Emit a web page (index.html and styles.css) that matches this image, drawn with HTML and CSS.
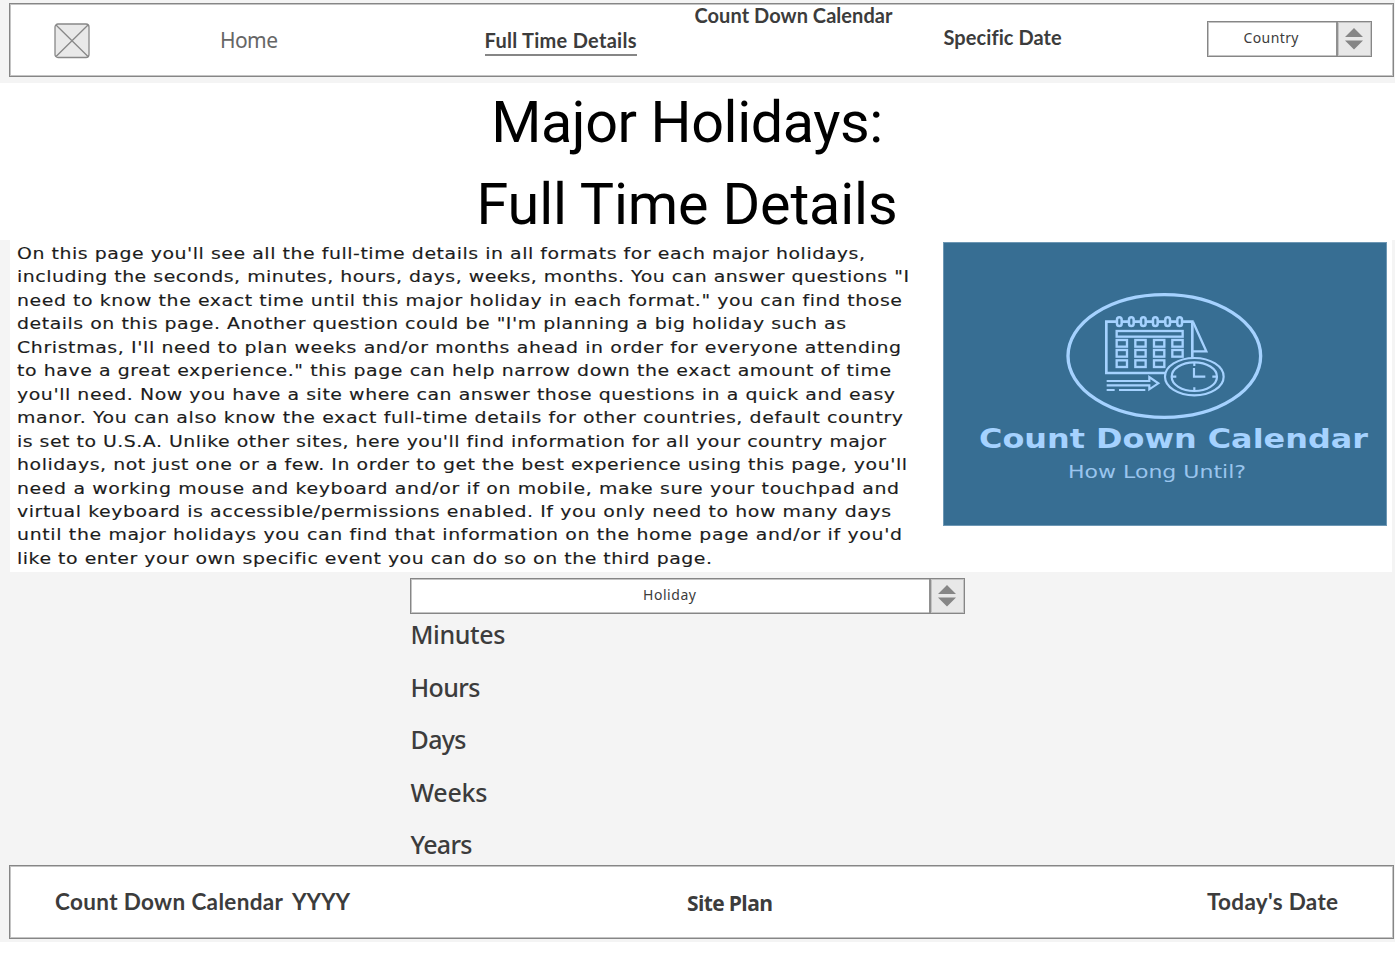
FILE: index.html
```html
<!DOCTYPE html>
<html lang="en">
<head>
<meta charset="utf-8">
<title>Major Holidays: Full Time Details</title>
<link rel="stylesheet" href="styles.css">
</head>
<body>
<div class="page">
  <header class="top">
    <nav class="panel nav">
      <svg class="placeholder" viewBox="0 0 36 36"><rect x="1" y="1" width="34" height="33.5" rx="3"/><path d="M2 2L34 33.5M34 2L2 33.5"/></svg>
      <a class="home"><span data-fit="58">Home</span></a>
      <a class="current"><span data-fit="152">Full Time Details</span></a>
      <a class="brand"><span data-fit="198">Count Down Calendar</span></a>
      <a class="specific"><span data-fit="118">Specific Date</span></a>
      <div class="select country">
        <div class="value"><span data-fit="55">Country</span></div>
        <div class="stepper"><svg viewBox="0 0 18 22"><path d="M9 0L18 9H0zM0 12.5H18L9 21.5z"/></svg></div>
      </div>
    </nav>
  </header>

  <div class="hero">
    <h1><span data-fit="392">Major Holidays:</span><br><span data-fit="421">Full Time Details</span></h1>
  </div>

  <main>
    <section class="intro">
      <p class="copy" data-stretch="1.18">
        <span data-fit="848">On this page you'll see all the full-time details in all formats for each major holidays,</span>
        <span data-fit="892">including the seconds, minutes, hours, days, weeks, months. You can answer questions "I</span>
        <span data-fit="885">need to know the exact time until this major holiday in each format." you can find those</span>
        <span data-fit="829">details on this page. Another question could be "I'm planning a big holiday such as</span>
        <span data-fit="884">Christmas, I'll need to plan weeks and/or months ahead in order for everyone attending</span>
        <span data-fit="874">to have a great experience." this page can help narrow down the exact amount of time</span>
        <span data-fit="878">you'll need. Now you have a site where can answer those questions in a quick and easy</span>
        <span data-fit="886">manor. You can also know the exact full-time details for other countries, default country</span>
        <span data-fit="869">is set to U.S.A. Unlike other sites, here you'll find information for all your country major</span>
        <span data-fit="890">holidays, not just one or a few. In order to get the best experience using this page, you'll</span>
        <span data-fit="882">need a working mouse and keyboard and/or if on mobile, make sure your touchpad and</span>
        <span data-fit="874">virtual keyboard is accessible/permissions enabled. If you only need to how many days</span>
        <span data-fit="885">until the major holidays you can find that information on the home page and/or if you'd</span>
        <span data-fit="695">like to enter your own specific event you can do so on the third page.</span>
      </p>
      <svg class="logo" viewBox="0 0 444 284">
        <rect class="logo-bg" x=".5" y=".5" width="443" height="283"/>
        <g class="art" transform="translate(107 38) scale(.3333)">
          <ellipse cx="343" cy="228" rx="289" ry="184" stroke-width="10"/>
          <path d="M345 279H169V125H427V234" stroke-width="8"/>
          <path d="M429 125L469 214H429" stroke-width="7"/>
          <g class="ring" stroke-width="7.5">
            <rect x="201" y="112" width="14" height="26" rx="7"/><rect x="237" y="112" width="14" height="26" rx="7"/><rect x="273" y="112" width="14" height="26" rx="7"/><rect x="309" y="112" width="14" height="26" rx="7"/><rect x="346" y="112" width="14" height="26" rx="7"/><rect x="382" y="112" width="14" height="26" rx="7"/>
          </g>
          <g stroke-width="7">
            <rect x="200" y="153" width="198" height="17"/>
            <rect x="200" y="180" width="31" height="20"/><rect x="256" y="180" width="31" height="20"/><rect x="312" y="180" width="31" height="20"/><rect x="367" y="180" width="31" height="20"/>
            <rect x="200" y="210" width="31" height="20"/><rect x="256" y="210" width="31" height="20"/><rect x="312" y="210" width="31" height="20"/><rect x="367" y="210" width="31" height="20"/>
            <rect x="200" y="241" width="31" height="20"/><rect x="256" y="241" width="31" height="20"/><rect x="312" y="241" width="31" height="20"/>
          </g>
          <g stroke-width="6.5">
            <ellipse class="ring" cx="433" cy="290" rx="88" ry="56"/>
            <ellipse cx="433" cy="290" rx="68" ry="43"/>
            <path d="M432 264V290H466M433 247V258M433 322V333M365 290H379M487 290H501"/>
            <path d="M170 303H298V291L325 310L298 328V316H170M170 330H194M207 330H286"/>
          </g>
        </g>
        <text class="logo-name" x="36" y="206" textLength="389" lengthAdjust="spacingAndGlyphs">Count Down Calendar</text>
        <text class="logo-tag" x="125" y="236" textLength="178" lengthAdjust="spacingAndGlyphs">How Long Until?</text>
      </svg>
    </section>

    <section class="details">
      <div class="select holiday">
        <div class="value"><span data-fit="53">Holiday</span></div>
        <div class="stepper"><svg viewBox="0 0 18 22"><path d="M9 0L18 9H0zM0 12.5H18L9 21.5z"/></svg></div>
      </div>
      <ul>
        <li><span data-fit="95">Minutes</span></li>
        <li><span data-fit="70">Hours</span></li>
        <li><span data-fit="56">Days</span></li>
        <li><span data-fit="77">Weeks</span></li>
        <li><span data-fit="62">Years</span></li>
      </ul>
    </section>
  </main>

  <footer class="panel foot">
    <div><span data-fit="228">Count Down Calendar</span><span class="year" data-fit="58">YYYY</span></div>
    <div class="plan"><span data-fit="86">Site Plan</span></div>
    <div><span data-fit="131">Today's Date</span></div>
  </footer>
</div>
<script src="fit.js"></script>
</body>
</html>
```

FILE: styles.css
```css
* { box-sizing: border-box; }
body { margin: 0; background: #fff; overflow: hidden; font-family: "Lato", sans-serif; color: #3c3c3c; }
[data-fit] { display: inline-block; white-space: pre; }

.page { height: 942px; background: #f4f4f4; }
.top { height: 83px; padding: 3px 1px 0 9px; }
.panel { height: 74px; background: #fff; border: 1px solid #868686; box-shadow: inset 0 0 0 1px #c4c4c4; }

.nav { display: grid; grid-template-columns: 165px 265px 210px 249px 263px 165px; padding-left: 44.5px; align-items: start; }
.nav a { font-size: 20px; font-weight: 700; line-height: 26px; }
.placeholder { width: 36px; height: 36px; margin: 19px 0 0 -.5px; }
.placeholder rect { fill: #e9e9e9; stroke: #888; stroke-width: 1.3; }
.placeholder path { stroke: #888; stroke-width: 1.3; }
.nav .home { margin-top: 22px; padding-left: .5px; font: 400 21px/28px "Noto Sans", sans-serif; color: #666; }
.nav .current { margin-top: 23px; }
.current span { height: 29px; border-bottom: 2px solid #868686; }
.brand { margin-top: -2px; }
.specific { margin-top: 20px; }
.country { width: 165px; margin-top: 17px; }

.select { display: flex; height: 36px; background: #fff; border: 1px solid #868686; box-shadow: inset 0 0 0 1px #c4c4c4; }
.select .value { flex: 1; padding-right: 1px; font: 400 14px/31px "Noto Sans", sans-serif; text-align: center; }
.stepper { width: 35px; background: #e8e8e8; border-left: 2px solid #909090; box-shadow: inset 0 0 0 1px #c4c4c4; display: flex; align-items: center; justify-content: center; padding-right: 1px; }
.stepper svg { width: 18px; height: 22px; fill: #868686; }

.hero { display: flow-root; height: 157px; background: #fff; }
h1 { margin: -1px 21px 0 0; font: 400 57.5px/82px "Roboto", sans-serif; text-align: center; color: #000; }

.intro { display: flex; height: 332px; margin: 0 3px 0 10px; padding: 2px 5px 0 7px; background: #fff; justify-content: space-between; }
.copy { margin: 0; font: 16px/23.46px "DejaVu Sans", sans-serif; color: #1c1c1c; transform: scaleX(1.18); transform-origin: left top; -webkit-text-stroke: .15px #1c1c1c; }
.copy span { display: table; }
.logo { width: 444px; height: 284px; }
.logo-bg { fill: #376e93; stroke: #6d97b4; }
.art { fill: none; stroke: #a5d2ff; }
.art .ring { fill: #376e93; }
.logo-name { font: 700 26px "DejaVu Sans", sans-serif; fill: #a5d2ff; }
.logo-tag { font: 400 17px "DejaVu Sans", sans-serif; fill: #9ac5ee; }

.details { width: 555px; height: 293px; margin-left: 410px; padding-top: 6px; }
.details ul { display: flex; flex-direction: column; gap: 12.5px; margin: 0; padding: 0 0 0 .5px; list-style: none; font: 500 25px/40px "Noto Sans", sans-serif; }

.foot { display: grid; grid-template-columns: 632px 521px 1fr; width: 1385px; margin-left: 9px; padding-left: 45px; font-size: 22.5px; font-weight: 700; line-height: 72px; }
.foot > :last-child { margin-left: -1px; }
.year { margin-left: 9px; }
.plan { font: 700 21px/74px "Open Sans", sans-serif; }
```

FILE: fit.js
```javascript
// Tracks each label so that it fills the measure given in data-fit.
// Text inside a horizontally stretched block is fitted before the stretch.
document.querySelectorAll('[data-fit]').forEach(function (el) {
  var block = el.closest('[data-stretch]');
  var stretch = block ? Number(block.dataset.stretch) : 1;
  var measure = Number(el.dataset.fit) / stretch;
  var width = el.getBoundingClientRect().width / stretch;
  el.style.letterSpacing = (measure - width) / (el.textContent.length - 1) + 'px';
  el.style.width = measure + 'px';
});
```
